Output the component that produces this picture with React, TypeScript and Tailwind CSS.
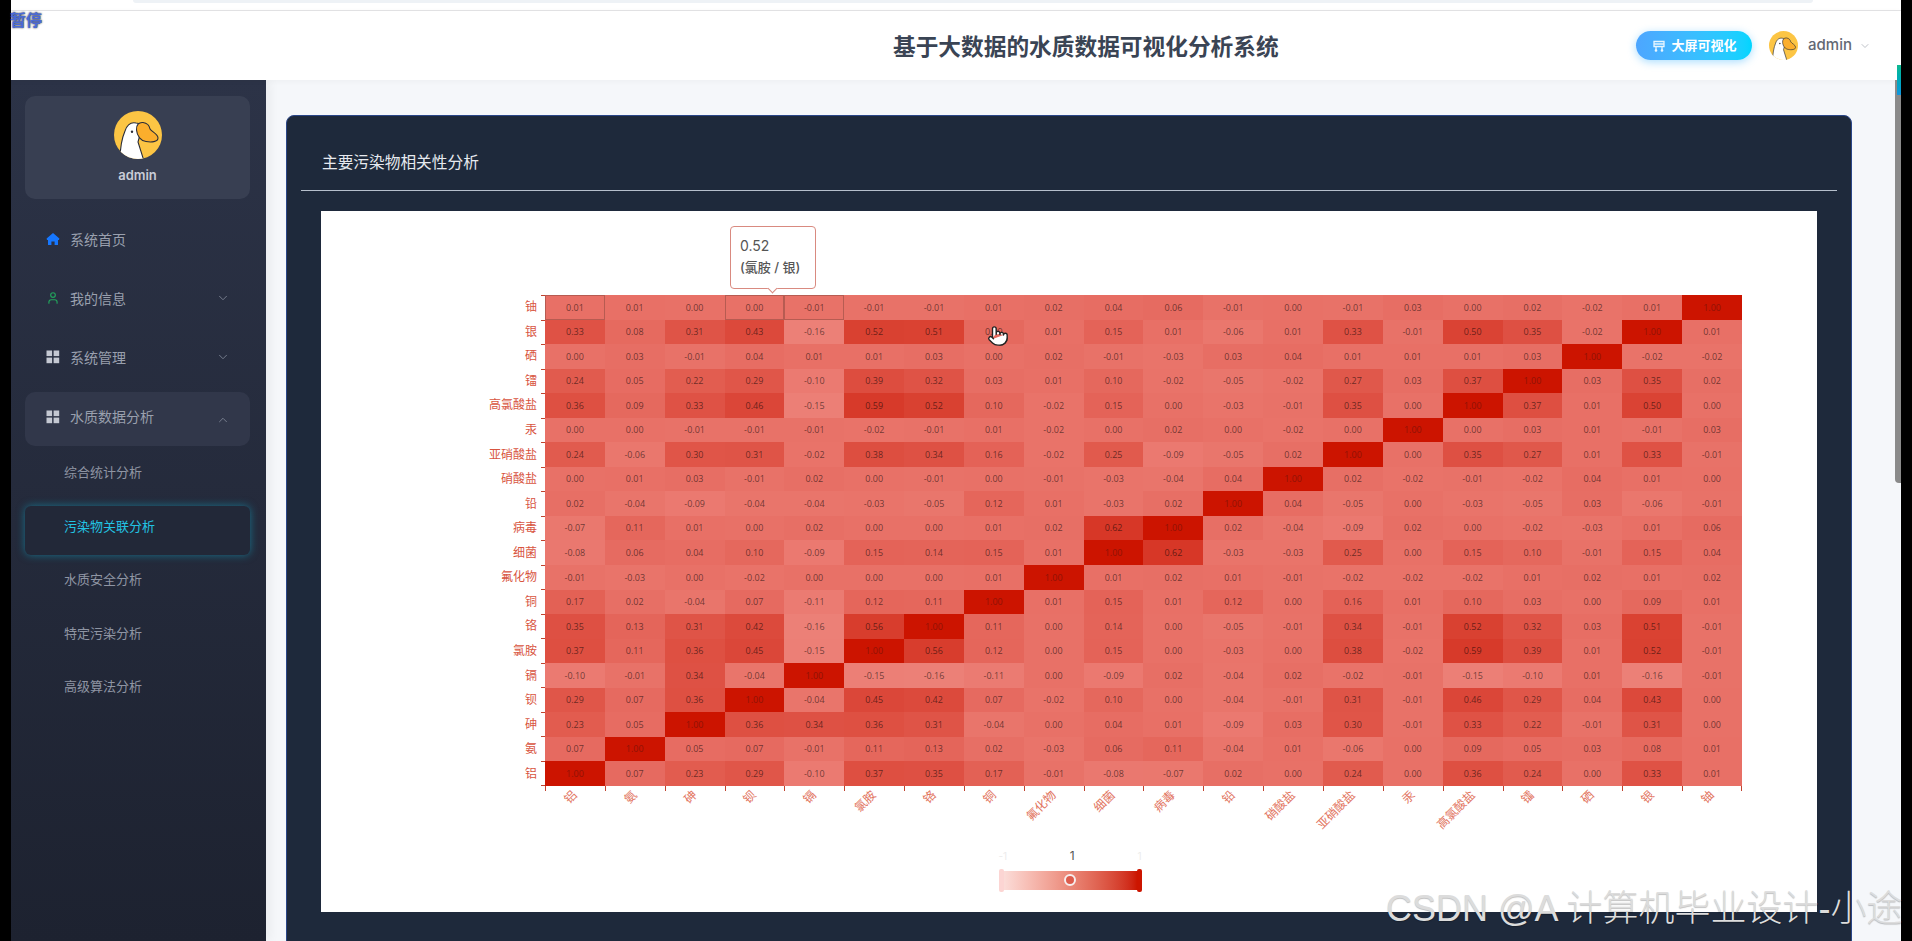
import { ChevronDown, ChevronUp, Pointer, User } from "lucide-react";

const labels = ["铝", "氨", "砷", "钡", "镉", "氯胺", "铬", "铜", "氟化物", "细菌", "病毒", "铅", "硝酸盐", "亚硝酸盐", "汞", "高氯酸盐", "镭", "硒", "银", "铀"];

// top row first, same order as the picture
const rows: { name: string; values: string }[] = [
  { name: "铀", values: "0.01 0.01 0.00 0.00 -0.01 -0.01 -0.01 0.01 0.02 0.04 0.06 -0.01 0.00 -0.01 0.03 0.00 0.02 -0.02 0.01 1.00" },
  { name: "银", values: "0.33 0.08 0.31 0.43 -0.16 0.52 0.51 0.09 0.01 0.15 0.01 -0.06 0.01 0.33 -0.01 0.50 0.35 -0.02 1.00 0.01" },
  { name: "硒", values: "0.00 0.03 -0.01 0.04 0.01 0.01 0.03 0.00 0.02 -0.01 -0.03 0.03 0.04 0.01 0.01 0.01 0.03 1.00 -0.02 -0.02" },
  { name: "镭", values: "0.24 0.05 0.22 0.29 -0.10 0.39 0.32 0.03 0.01 0.10 -0.02 -0.05 -0.02 0.27 0.03 0.37 1.00 0.03 0.35 0.02" },
  { name: "高氯酸盐", values: "0.36 0.09 0.33 0.46 -0.15 0.59 0.52 0.10 -0.02 0.15 0.00 -0.03 -0.01 0.35 0.00 1.00 0.37 0.01 0.50 0.00" },
  { name: "汞", values: "0.00 0.00 -0.01 -0.01 -0.01 -0.02 -0.01 0.01 -0.02 0.00 0.02 0.00 -0.02 0.00 1.00 0.00 0.03 0.01 -0.01 0.03" },
  { name: "亚硝酸盐", values: "0.24 -0.06 0.30 0.31 -0.02 0.38 0.34 0.16 -0.02 0.25 -0.09 -0.05 0.02 1.00 0.00 0.35 0.27 0.01 0.33 -0.01" },
  { name: "硝酸盐", values: "0.00 0.01 0.03 -0.01 0.02 0.00 -0.01 0.00 -0.01 -0.03 -0.04 0.04 1.00 0.02 -0.02 -0.01 -0.02 0.04 0.01 0.00" },
  { name: "铅", values: "0.02 -0.04 -0.09 -0.04 -0.04 -0.03 -0.05 0.12 0.01 -0.03 0.02 1.00 0.04 -0.05 0.00 -0.03 -0.05 0.03 -0.06 -0.01" },
  { name: "病毒", values: "-0.07 0.11 0.01 0.00 0.02 0.00 0.00 0.01 0.02 0.62 1.00 0.02 -0.04 -0.09 0.02 0.00 -0.02 -0.03 0.01 0.06" },
  { name: "细菌", values: "-0.08 0.06 0.04 0.10 -0.09 0.15 0.14 0.15 0.01 1.00 0.62 -0.03 -0.03 0.25 0.00 0.15 0.10 -0.01 0.15 0.04" },
  { name: "氟化物", values: "-0.01 -0.03 0.00 -0.02 0.00 0.00 0.00 0.01 1.00 0.01 0.02 0.01 -0.01 -0.02 -0.02 -0.02 0.01 0.02 0.01 0.02" },
  { name: "铜", values: "0.17 0.02 -0.04 0.07 -0.11 0.12 0.11 1.00 0.01 0.15 0.01 0.12 0.00 0.16 0.01 0.10 0.03 0.00 0.09 0.01" },
  { name: "铬", values: "0.35 0.13 0.31 0.42 -0.16 0.56 1.00 0.11 0.00 0.14 0.00 -0.05 -0.01 0.34 -0.01 0.52 0.32 0.03 0.51 -0.01" },
  { name: "氯胺", values: "0.37 0.11 0.36 0.45 -0.15 1.00 0.56 0.12 0.00 0.15 0.00 -0.03 0.00 0.38 -0.02 0.59 0.39 0.01 0.52 -0.01" },
  { name: "镉", values: "-0.10 -0.01 0.34 -0.04 1.00 -0.15 -0.16 -0.11 0.00 -0.09 0.02 -0.04 0.02 -0.02 -0.01 -0.15 -0.10 0.01 -0.16 -0.01" },
  { name: "钡", values: "0.29 0.07 0.36 1.00 -0.04 0.45 0.42 0.07 -0.02 0.10 0.00 -0.04 -0.01 0.31 -0.01 0.46 0.29 0.04 0.43 0.00" },
  { name: "砷", values: "0.23 0.05 1.00 0.36 0.34 0.36 0.31 -0.04 0.00 0.04 0.01 -0.09 0.03 0.30 -0.01 0.33 0.22 -0.01 0.31 0.00" },
  { name: "氨", values: "0.07 1.00 0.05 0.07 -0.01 0.11 0.13 0.02 -0.03 0.06 0.11 -0.04 0.01 -0.06 0.00 0.09 0.05 0.03 0.08 0.01" },
  { name: "铝", values: "1.00 0.07 0.23 0.29 -0.10 0.37 0.35 0.17 -0.01 -0.08 -0.07 0.02 0.00 0.24 0.00 0.36 0.24 0.00 0.33 0.01" },
];

function cellColor(v: number) {
  const r = Math.round(232 - 28 * v);
  const g = Math.round(113 - 93 * v);
  const b = Math.round(103 - 103 * v);
  return `rgb(${r},${g},${b})`;
}

function Goose({ size }: { size: number }) {
  return (
    <svg width={size} height={size} viewBox="0 0 48 48" className="shrink-0">
      <defs>
        <clipPath id={`goose-${size}`}>
          <circle cx="24" cy="24" r="24" />
        </clipPath>
      </defs>
      <g clipPath={`url(#goose-${size})`}>
        <rect width="48" height="48" fill="#fcc544" />
        <path d="M6 50 C6 38 8 27 11 20 C13 14 17 11 22 12 C26 12 28 15 27 20 L24 31 L30 50 Z" fill="#fff" stroke="#2a2d38" strokeWidth="1.1" />
        <path d="M22.5 19 C22 14 25 11 29 11.5 C33 12 35.5 15 36 18 C38 21 44 23 44 27 C44 31 37 31.5 32 30.5 C27 30 23 25 22.5 19 Z" fill="#fbae2c" stroke="#2a2d38" strokeWidth="1.1" />
        <circle cx="18" cy="20.7" r="1.2" fill="#2a2d38" />
      </g>
    </svg>
  );
}

function GridIcon() {
  return (
    <svg width="14" height="14" viewBox="0 0 14 14" fill="#c4c8d2" className="shrink-0">
      <rect x="0.5" y="0.5" width="5.6" height="5.6" />
      <rect x="7.6" y="0.5" width="5.6" height="5.6" />
      <rect x="0.5" y="7.6" width="5.6" height="5.6" />
      <rect x="7.6" y="7.6" width="5.6" height="5.6" />
    </svg>
  );
}

function HomeIcon() {
  return (
    <svg width="14" height="14" viewBox="0 0 14 14" fill="#1677ff" className="shrink-0">
      <path d="M7 1 L13.4 6.6 L13 8 L12 8 L12 13 L8.6 13 L8.6 9.4 L5.4 9.4 L5.4 13 L2 13 L2 8 L1 8 L0.6 6.6 Z" />
    </svg>
  );
}

function MenuRow({ icon, text, arrow }: { icon: React.ReactNode; text: string; arrow?: boolean }) {
  return (
    <div className="flex h-[54px] items-center pl-[21px] pr-[20px] mt-[5px] first:mt-0 text-[14px] text-[#9aa0ae]">
      {icon}
      <span className="ml-[10px]">{text}</span>
      {arrow && <ChevronDown className="ml-auto text-[#7f8696]" size={14} strokeWidth={1.5} />}
    </div>
  );
}

function Sidebar() {
  const subItems = ["综合统计分析", "污染物关联分析", "水质安全分析", "特定污染分析", "高级算法分析"];
  return (
    <aside className="z-10 w-[255px] shrink-0 bg-gradient-to-b from-[#2c3347] to-[#1d2230] pl-[14px] pr-[16px] pt-[16px] shadow-[4px_0_10px_rgba(0,0,0,0.05)]">
      <div className="flex h-[103px] flex-col items-center rounded-[10px] bg-[#383f52] pt-[15px]">
        <Goose size={48} />
        <span className="mt-[7px] text-[13px] font-semibold leading-[18px] text-[#c9cdd7]">admin</span>
      </div>
      <div className="mt-[13px]">
        <MenuRow icon={<HomeIcon />} text="系统首页" />
        <MenuRow icon={<User className="shrink-0 text-[#22a35c]" size={14} strokeWidth={2} />} text="我的信息" arrow />
        <MenuRow icon={<GridIcon />} text="系统管理" arrow />
      </div>
      <div className="mt-[8px] flex h-[54px] items-start rounded-[10px] bg-[#31374a] pl-[21px] pr-[20px] pt-[15px] text-[14px] leading-[20px] text-[#9aa0ae]">
        <span className="mt-[3px]"><GridIcon /></span>
        <span className="ml-[10px]">水质数据分析</span>
        <ChevronUp className="ml-auto mt-[6px] text-[#7f8696]" size={14} strokeWidth={1.5} />
      </div>
      <div className="mt-[6px] flex flex-col gap-[4.5px]">
        {subItems.map((item, i) =>
          i === 1 ? (
            <div key={item} className="h-[49px] rounded-[6px] bg-[#222838] pl-[39px] pt-[10px] text-[13px] leading-[20px] text-[#22c3e3] shadow-[0_0_8px_rgba(20,150,180,0.65)]">
              {item}
            </div>
          ) : (
            <div key={item} className="h-[49px] pl-[39px] pt-[10px] text-[13px] leading-[20px] text-[#8f95a3]">
              {item}
            </div>
          ),
        )}
      </div>
    </aside>
  );
}

function Header() {
  return (
    <header className="relative z-20 flex h-[69px] shrink-0 items-center justify-end bg-white shadow-[0_1px_6px_rgba(0,0,0,0.04)]">
      <h1 className="absolute left-[882px] top-[21px] text-[22.7px] leading-[30px] font-bold text-[#3a4454]">基于大数据的水质数据可视化分析系统</h1>
      <button className="flex h-[29px] w-[116px] items-center justify-center gap-[6px] rounded-full bg-gradient-to-r from-[#4da6ff] to-[#00d5ff] text-[13px] font-bold text-white shadow-[0_2px_8px_rgba(40,170,255,0.4)]">
        <svg width="14" height="14" viewBox="0 0 14 14" fill="none" stroke="#e8f6ff" strokeWidth="1.3">
          <path d="M2 2.5 H12 V7.5 H2 Z M2 5 H12 M4 7.5 V11 M10 7.5 V11" />
          <circle cx="4" cy="11.5" r="0.7" />
          <circle cx="10" cy="11.5" r="0.7" />
        </svg>
        大屏可视化
      </button>
      <div className="ml-[17px] mr-[30px] flex items-center">
        <Goose size={29} />
        <span className="ml-[10px] text-[15px] font-medium text-[#636873]">admin</span>
        <ChevronDown className="ml-[7px] text-[#a9adb6]" size={12} strokeWidth={1.5} />
      </div>
    </header>
  );
}

function HeatCell({ value, row, col }: { value: string; row: number; col: number }) {
  const outlined = row === 0 && (col === 0 || col === 3 || col === 4);
  const isOne = value === "1.00";
  return (
    <div
      className={`flex items-center justify-center font-['Open_Sans',sans-serif] text-[9px] ${isOne ? "text-[#8f1206]" : "text-black/55"} ${outlined ? "shadow-[inset_0_0_0_1px_rgba(110,60,50,0.4)]" : ""}`}
      style={{ backgroundColor: cellColor(parseFloat(value)) }}
    >
      {value}
    </div>
  );
}

function Heatmap() {
  return (
    <div className="relative h-full pt-[84px]">
      {/* tooltip of the hovered cell */}
      <div className="absolute left-[409px] top-[15px] h-[63px] w-[86px] rounded-[4px] border-[1.5px] border-[#d98a80] bg-white pl-[9px] pt-[7px] text-[#555]">
        <div className="text-[14px] leading-[24px]">0.52</div>
        <div className="whitespace-nowrap text-[13px] font-medium leading-[18px]">(氯胺 / 银)</div>
        <div className="absolute bottom-[-4px] left-[38px] h-[7px] w-[7px] rotate-45 border-b-[1.5px] border-r-[1.5px] border-[#d98a80] bg-white" />
      </div>

      <div className="flex">
        <div className="grid h-[491px] w-[220px] grid-rows-[repeat(20,minmax(0,1fr))]">
          {rows.map((r) => (
            <div key={r.name} className="flex items-center justify-end pr-[4px] text-[12px] text-[#d8553f]">
              {r.name}
            </div>
          ))}
        </div>
        <div className="grid h-[491px] w-[4px] grid-rows-[repeat(20,minmax(0,1fr))] border-b border-[#c0432f]">
          {rows.map((r) => (
            <div key={r.name} className="border-t border-[#c0432f]" />
          ))}
        </div>
        <div className="grid h-[491px] w-[1197px] grid-cols-[repeat(20,minmax(0,1fr))] grid-rows-[repeat(20,minmax(0,1fr))]">
          {rows.map((r, ri) => r.values.split(" ").map((v, ci) => <HeatCell key={ri + "-" + ci} value={v} row={ri} col={ci} />))}
        </div>
      </div>

      <div className="ml-[224px] grid h-[60px] w-[1197px] grid-cols-[repeat(20,minmax(0,1fr))]">
        {labels.map((l, i) => (
          <div key={l} className="relative">
            <div className="absolute left-0 top-0 h-[5px] w-px bg-[#c0432f]" />
            {i === 19 && <div className="absolute right-0 top-0 h-[5px] w-px bg-[#c0432f]" />}
            <span className="absolute right-[30px] top-0 origin-right -rotate-45 whitespace-nowrap text-[12px] leading-[14px] text-[#e2755f]">{l}</span>
          </div>
        ))}
      </div>

      {/* range control under the chart */}
      <div className="mx-auto w-[143px] translate-x-[1px] text-center">
        <div className="flex h-[20px] items-center justify-between text-[10px] text-[#ececec]">
          <span>-1</span>
          <span className="text-[12px] text-[#555]">1</span>
          <span>1</span>
        </div>
        <div className="relative mt-[3px] h-[23px]">
          <div className="absolute bottom-[2px] left-[5px] right-[5px] top-[2px] bg-gradient-to-r from-[#fbdcd8] to-[#cc1500]" />
          <div className="absolute bottom-0 left-0 top-0 w-[5px] rounded-[2px] bg-[#fcd5d3]" />
          <div className="absolute bottom-0 right-0 top-0 w-[5px] rounded-[2px] bg-[#cc1500]" />
          <div className="absolute left-[65px] top-[5px] h-[12px] w-[12px] rounded-full border-2 border-[#f6eeee] bg-[#dd5c4d]" />
        </div>
      </div>
    </div>
  );
}

export default function App() {
  return (
    <div className="relative flex h-screen overflow-hidden bg-black font-['Inter','Noto_Sans_CJK_SC',sans-serif]">
      <div className="w-[11px] shrink-0 bg-black" />
      <div className="flex min-w-0 flex-1 flex-col">
        <div className="h-[11px] shrink-0 border-b border-[#e4e4e6] bg-white">
          <div className="ml-[122px] h-[3px] w-[1680px] rounded-b-[6px] bg-[#eef2f6]" />
        </div>
        <Header />
        <div className="flex min-h-0 flex-1">
          <Sidebar />
          <main className="min-w-0 flex-1 bg-[#f5f7fa] pl-[20px] pr-[49px] pt-[35px]">
            <section className="h-[900px] rounded-t-[8px] border border-[#2a4688] bg-[#1e293b] px-[14px] pt-[36px]">
              <div className="h-[39px] border-b border-[#b6bfcc] pl-[21px] text-[15.7px] leading-[22px] text-[#e6e9ef]">主要污染物相关性分析</div>
              <div className="mx-[20px] mt-[20px] h-[701px] bg-white">
                <Heatmap />
              </div>
            </section>
          </main>
        </div>
      </div>
      <div className="w-[11px] shrink-0 bg-black" />

      {/* screen-recording leftovers on top of the page */}
      <Pointer className="absolute left-[987px] top-[325px] z-30 text-[#222]" fill="#fff" size={22} strokeWidth={1.5} />
      <span className="absolute left-[10px] top-[9px] z-30 text-[16px] font-bold leading-[22px] text-[#4a6ad6] [text-shadow:0_0_2px_#222]">暂停</span>
      <div className="absolute right-[11px] top-[80px] z-30 h-[403px] w-[6px] rounded-bl-[4px] bg-[#8a8a8a]" />
      <div className="absolute right-[11px] top-[65px] z-30 h-[30px] w-[4px] bg-gradient-to-b from-[#10b98f] to-[#1296e0]" />
      <span className="absolute left-[1386px] top-[888px] z-30 whitespace-nowrap font-['Liberation_Sans','Noto_Sans_CJK_SC',sans-serif] text-[36px] font-light leading-[42px] text-[#dcdcdc] [text-shadow:0_1px_1px_rgba(0,0,0,0.25)]">CSDN @A 计算机毕业设计-小途</span>
    </div>
  );
}
